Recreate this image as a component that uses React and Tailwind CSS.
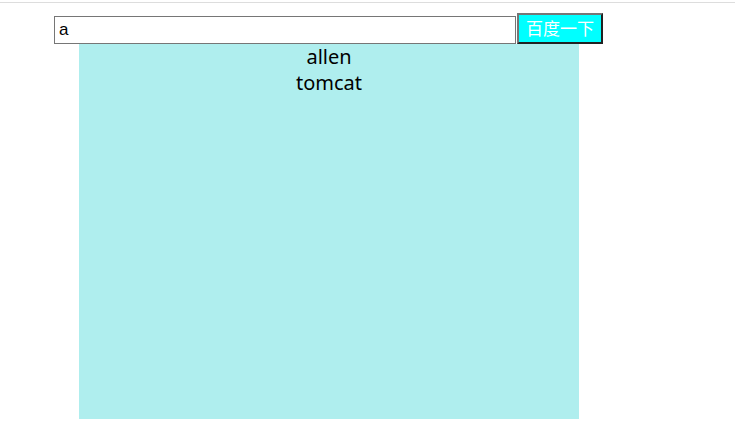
export default function App() {
  return (
    <div className="w-[735px] h-[448px] bg-white relative overflow-hidden" style={{ fontFamily: '"Noto Sans", "Noto Sans CJK SC", sans-serif' }}>
      <div className="h-[2px]" />
      <div className="h-px bg-[#dddddd]" />
      <div className="pl-[54px] pt-[10px]">
        <div className="flex items-start">
          <input
            readOnly
            value="a"
            className="mt-[3px] w-[462px] h-[28px] border border-[#767676] bg-white px-[4px] text-[17px] text-black outline-none"
            style={{ fontFamily: '"Liberation Sans", sans-serif' }}
          />
          <button className="ml-px w-[86px] h-[31px] bg-[#00ffff] text-white text-[17px] leading-none border-2 border-t-[#767676] border-l-[#767676] border-r-[#222222] border-b-[#222222]">
            百度一下
          </button>
        </div>
        <div className="ml-[25px] w-[500px] h-[375px] bg-[#afeeee] text-center text-[20px] leading-[26px] text-black">
          <div>allen</div>
          <div>tomcat</div>
        </div>
      </div>
    </div>
  );
}
